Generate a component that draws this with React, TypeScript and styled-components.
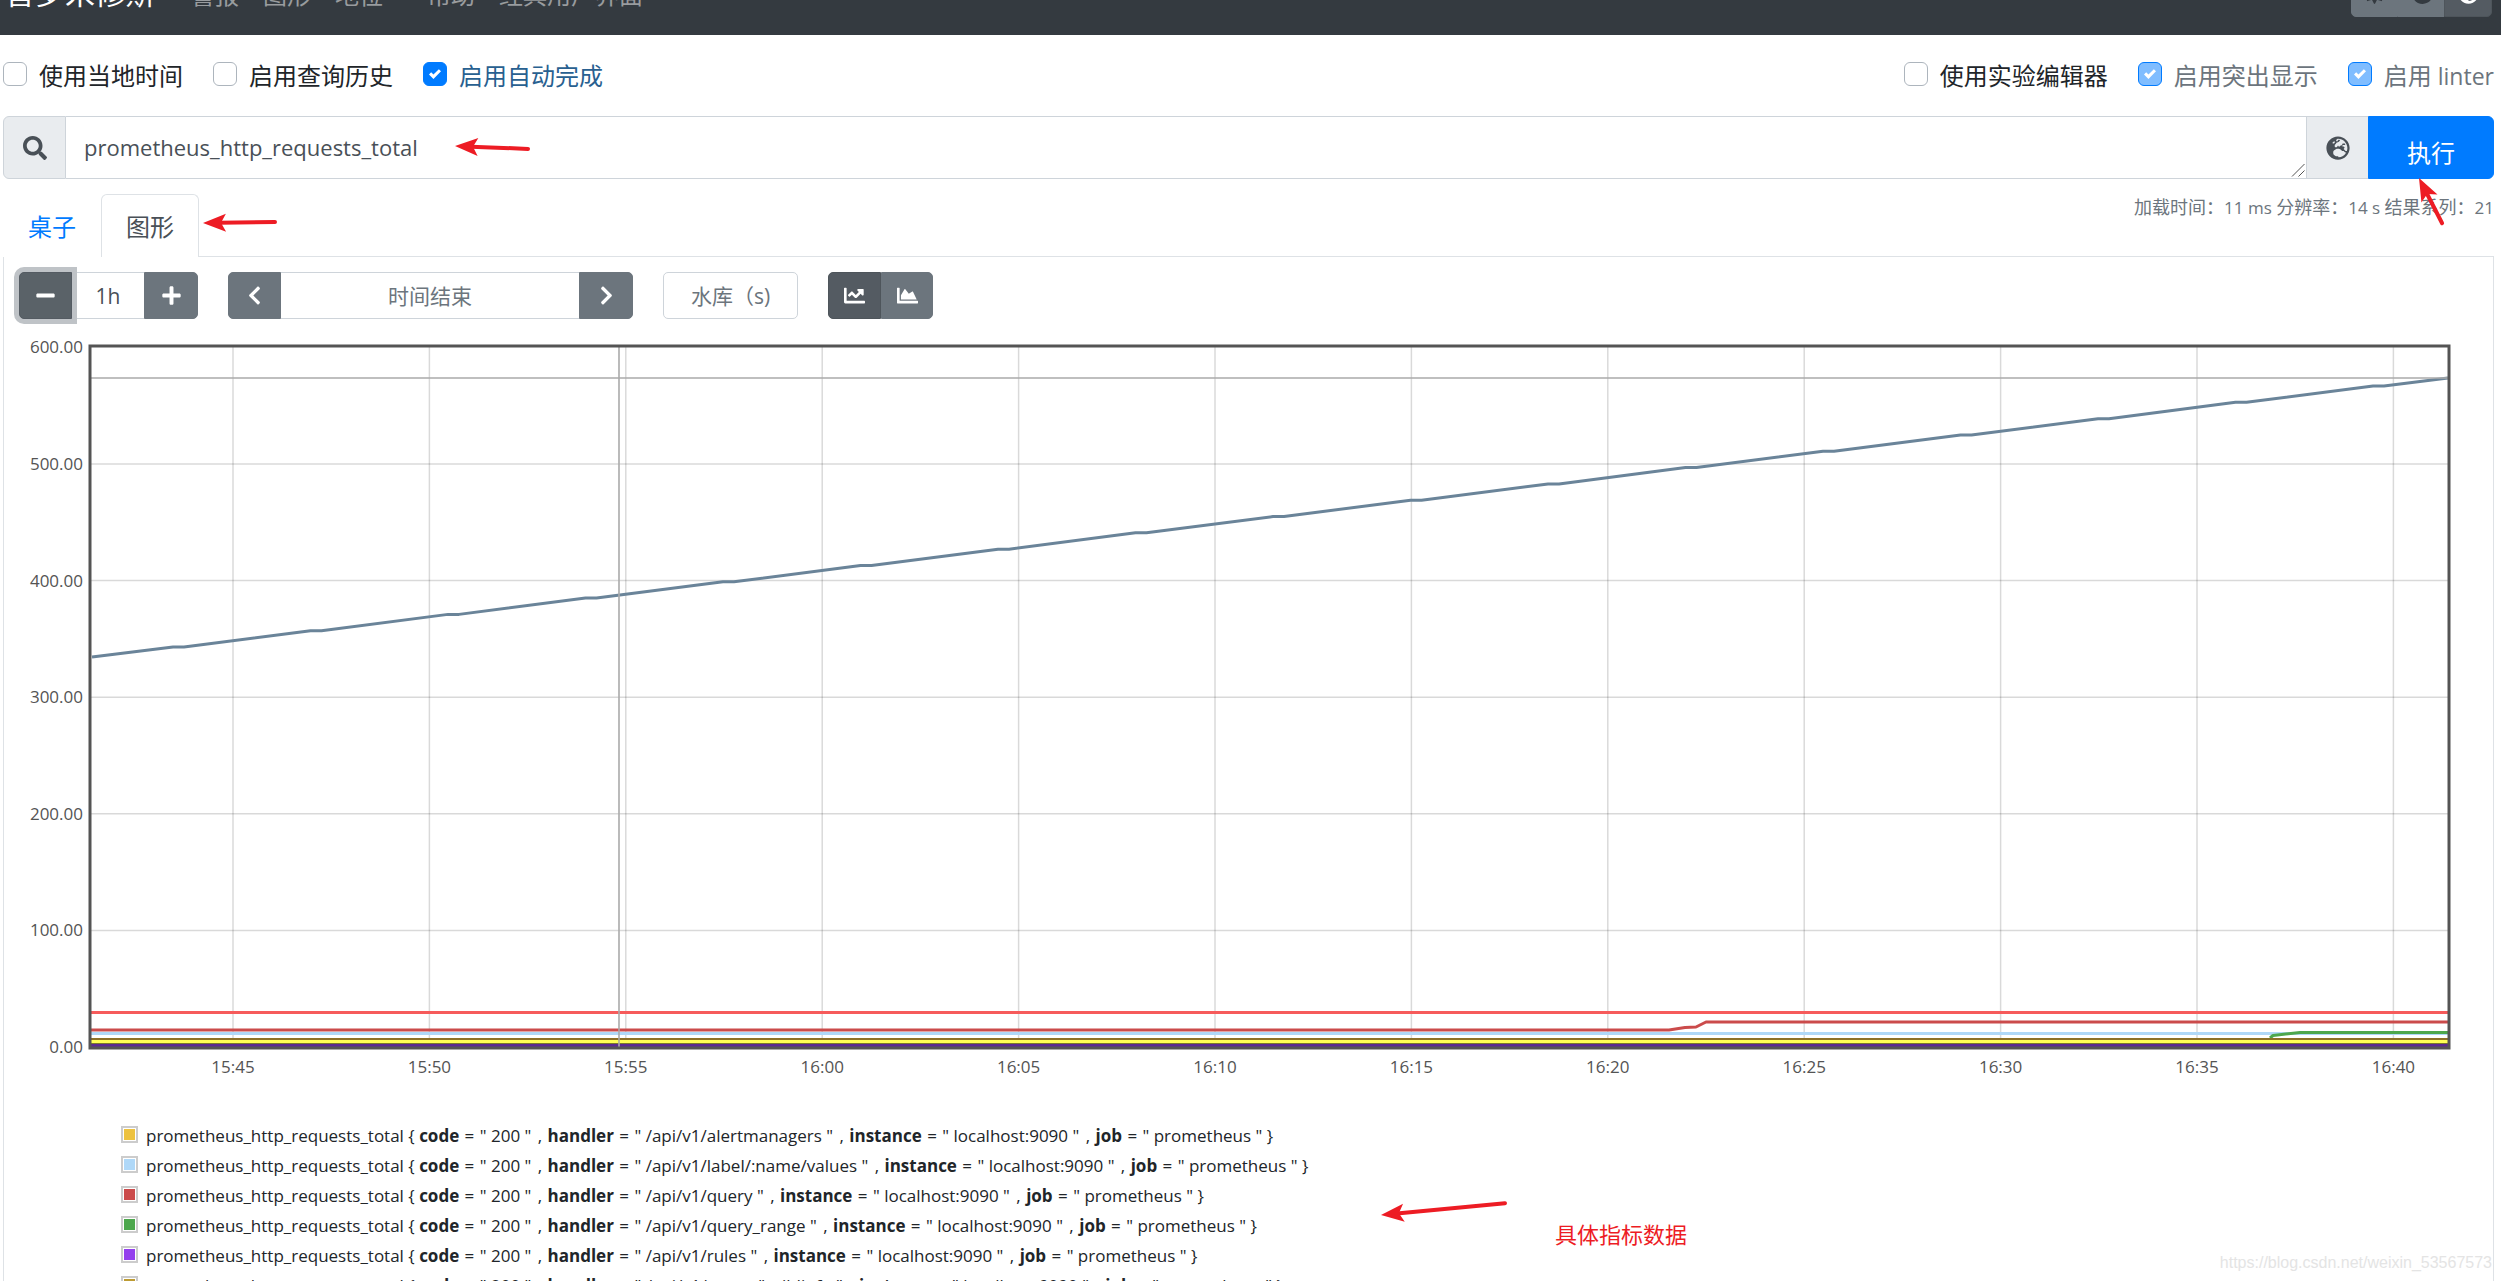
import React from "react";
import styled, { createGlobalStyle, css } from "styled-components";
import {
  FaSearch, FaSun, FaMoon, FaAdjust, FaGlobeEurope, FaMinus, FaPlus,
  FaChevronLeft, FaChevronRight, FaChartLine, FaChartArea,
} from "react-icons/fa";

const CHECK =
  "url(\"data:image/svg+xml,%3csvg xmlns='http://www.w3.org/2000/svg' width='8' height='8' viewBox='0 0 8 8'%3e%3cpath fill='%23fff' d='M6.564.75l-3.59 3.612-1.538-1.55L0 4.26l2.974 2.99L8 2.193z'/%3e%3c/svg%3e\")";
const GRIP =
  "url(\"data:image/svg+xml,%3csvg xmlns='http://www.w3.org/2000/svg' width='15' height='15' viewBox='0 0 15 15'%3e%3cpath stroke='%23555' stroke-width='1' d='M1 13.5L13.5 1M7.500 13.5L13.500 7.500'/%3e%3c/svg%3e\")";

const Global = createGlobalStyle`
  *, *::before, *::after { box-sizing: border-box; }
  html { height: 100%; overflow: hidden; }
  body {
    margin: 0;
    height: 100%;
    overflow: hidden;
    background: #fff;
    color: #212529;
    font-family: "Open Sans", "Noto Sans CJK SC", sans-serif;
    font-size: 24px;
    line-height: 36px;
  }
  button, input, textarea { font-family: inherit; margin: 0; }
`;

const Navbar = styled.header`
  display: flex;
  align-items: center;
  height: 84px;
  margin-top: -49px;
  padding: 0 9px 0 5px;
  background: #343a40;
`;
const Brand = styled.a`
  margin-right: 24px;
  padding-bottom: 2px;
  color: #fff;
  font-size: 30px;
  line-height: 45px;
  text-decoration: none;
`;
const NavLinks = styled.nav`
  display: flex;
  flex: 1;
  padding-top: 4px;
`;
const NavLink = styled.a<{ $caret?: boolean }>`
  padding: 12px;
  color: rgba(255, 255, 255, 0.5);
  text-decoration: none;
  ${(p) => p.$caret && css`
    &::after {
      content: "";
      display: inline-block;
      margin-left: 6px;
      vertical-align: 6px;
      border: 7px solid transparent;
      border-top-color: currentColor;
      border-bottom: 0;
    }
  `}
`;
const ButtonGroup = styled.div`
  display: flex;
`;
const GroupButton = styled.button<{ $active?: boolean; $dark?: boolean; $focus?: boolean; $width: number }>`
  display: flex;
  align-items: center;
  justify-content: center;
  width: ${(p) => p.$width}px;
  height: 47px;
  padding: 0;
  border: 1px solid ${(p) => (p.$active ? "#4e555b" : "#6c757d")};
  border-radius: 0;
  background: ${(p) => (p.$active ? "#545b62" : "#6c757d")};
  color: ${(p) => (p.$dark ? "#343a40" : "#fff")};
  font-size: 21px;
  ${(p) => p.$focus && css`
    position: relative;
    z-index: 1;
    background: #5a6268;
    border-color: #545b62;
    box-shadow: 0 0 0 5px #bfc3c7;
  `}
  &:first-child { border-radius: 5px 0 0 5px; }
  &:last-child { border-radius: 0 5px 5px 0; }
`;

const Options = styled.div`
  display: flex;
  justify-content: space-between;
  padding: 23px 7px 0 3px;
`;
const OptionSet = styled.div`
  display: flex;
  gap: 30px;
`;
const Option = styled.label<{ $color?: string }>`
  display: flex;
  align-items: center;
  gap: 12px;
  height: 36px;
  color: ${(p) => p.$color ?? "#212529"};
  white-space: nowrap;
`;
const Latin = styled.span<{ $size: number }>`
  font-size: ${(p) => p.$size}px;
`;
const Tick = styled.input`
  appearance: none;
  width: 24px;
  height: 24px;
  margin: 0 0 4px;
  border: 1px solid #adb5bd;
  border-radius: 6px;
  background: #fff;
  &:checked {
    border-color: #007bff;
    background: #007bff ${CHECK} center / 12px 12px no-repeat;
  }
  &:checked:disabled { background-color: #80bdff; }
`;

const QueryBar = styled.form`
  display: flex;
  height: 63px;
  margin: 22px 7px 0 3px;
`;
const Addon = styled.span`
  display: flex;
  align-items: center;
  justify-content: center;
  width: 63px;
  border: 1px solid #ced4da;
  border-radius: 6px 0 0 6px;
  background: #e9ecef;
  color: #495057;
  font-size: 24px;
`;
const Expression = styled.textarea`
  flex: 1;
  height: 63px;
  padding: 12px 18px;
  border: 1px solid #ced4da;
  border-width: 1px 0;
  color: #495057;
  font-size: 22px;
  line-height: 36px;
  resize: vertical;
  outline: 0;
  overflow: hidden;
  &::-webkit-resizer { background: ${GRIP} right bottom no-repeat; }
`;
const Explorer = styled.button`
  display: flex;
  align-items: center;
  justify-content: center;
  width: 62px;
  padding: 0;
  border: 1px solid #ced4da;
  border-right: 0;
  background: #e9ecef;
  color: #495057;
  font-size: 24px;
`;
const Execute = styled.button`
  width: 126px;
  padding: 8px 0 0;
  border: 1px solid #007bff;
  border-radius: 0 6px 6px 0;
  background: #007bff;
  color: #fff;
  font-size: 24px;
`;

const TabRow = styled.div`
  display: flex;
  justify-content: space-between;
  align-items: flex-start;
  margin: 15px 7px 0 3px;
`;
const Tabs = styled.div`
  display: flex;
`;
const Tab = styled.button<{ $active?: boolean }>`
  height: 63px;
  padding: 0 24px 2px;
  border: 1px solid transparent;
  border-bottom: 0;
  border-radius: 6px 6px 0 0;
  background: #fff;
  color: #007bff;
  font-size: 24px;
  ${(p) => p.$active && css`
    position: relative;
    border-color: #dee2e6;
    color: #495057;
  `}
`;
const Stats = styled.div`
  color: #6c757d;
  font-size: 18px;
  line-height: 26px;
`;
const Panel = styled.main`
  margin: -1px 7px 0 3px;
  border: 1px solid #dee2e6;
  border-bottom: 0;
`;
const Controls = styled.div`
  display: flex;
  gap: 30px;
  padding: 15px 15px 0;
`;
const Field = styled.input<{ $width: number; $alone?: boolean }>`
  width: ${(p) => p.$width}px;
  height: 47px;
  padding: 4px 0;
  border: 1px solid #ced4da;
  border-width: ${(p) => (p.$alone ? "1px" : "1px 0")};
  border-radius: ${(p) => (p.$alone ? 5 : 0)}px;
  color: #495057;
  font-size: 21px;
  text-align: center;
  &::placeholder { color: #6c757d; opacity: 1; }
`;

const Chart = styled.svg`
  display: block;
  width: 100%;
  height: 770px;
  margin-top: 8px;
  font-size: 17px;
  fill: #545454;
`;
const Legend = styled.ul`
  margin: 0;
  padding: 24px 0 0 117px;
  list-style: none;
`;
const LegendRow = styled.li`
  display: flex;
  align-items: center;
  gap: 8px;
  height: 30px;
  font-size: 17px;
  line-height: 30px;
  white-space: pre;
`;
const Swatch = styled.span<{ $color: string }>`
  width: 17px;
  height: 17px;
  margin-bottom: 3px;
  border: 2px solid #ccc;
  padding: 1px;
  background: ${(p) => p.$color} content-box;
`;
const Equals = styled.span`
  margin: 0 1px;
`;
const Comma = styled.span`
  margin: 0 1px 0 2px;
`;

const Overlay = styled.svg`
  position: absolute;
  left: 0;
  top: 0;
  width: 2501px;
  height: 1281px;
  pointer-events: none;
`;
const Note = styled.div`
  position: absolute;
  left: 1555px;
  top: 1216px;
  color: #ed1c24;
  font-size: 22px;
`;
const Watermark = styled.div`
  position: absolute;
  right: 9px;
  bottom: 0;
  color: #e4e4e4;
  font-family: "Liberation Sans", sans-serif;
  font-size: 16px;
`;

/* Plot geometry, in pixels of the chart's own drawing area. */
const X0 = 86;
const X1 = 2445;
const TOP = 19;
const BOTTOM = 721;
const yOf = (v: number) => 720 - v * 1.166;
const TIMES = ["15:45", "15:50", "15:55", "16:00", "16:05", "16:10", "16:15", "16:20", "16:25", "16:30", "16:35", "16:40"];
const VALUES = [0, 100, 200, 300, 400, 500, 600];

/* The counter climbs steadily and pauses for one step every 3.5 minutes. */
const metricsPoints = () => {
  const pts = [`${X0 + 2},330`];
  for (let k = 0; k <= 16; k++) {
    const x = 169 + 137.5 * k;
    const y = 320 - 16.31 * k;
    pts.push(`${x},${y} ${x + 11},${y}`);
  }
  pts.push(`${X1 - 1},51`);
  return pts.join(" ");
};

const FlatLine = ({ y, color, width = 3 }: { y: number; color: string; width?: number }) => (
  <path d={`M${X0 + 1} ${y}H${X1 - 1}`} stroke={color} strokeWidth={width} />
);

const GraphPlot = () => (
  <Chart role="img" aria-label="prometheus_http_requests_total">
    <g stroke="#000" strokeOpacity="0.15" strokeWidth="1.5">
      {TIMES.map((t, i) => <path key={t} d={`M${229 + i * 196.4} ${TOP}V${BOTTOM}`} />)}
      {VALUES.slice(1, 6).map((v) => <path key={v} d={`M${X0} ${yOf(v)}H${X1}`} />)}
    </g>
    <g fill="none" strokeLinejoin="round">
      <polyline points={metricsPoints()} stroke="#6a8499" strokeWidth="3" />
      <FlatLine y={685.6} color="#f65b5b" />
      <FlatLine y={706.5} color="#afd8f8" />
      <polyline points={`${X0 + 1},703 1665,703 1681,700.5 1692,700 1702,695 ${X1 - 1},695`} stroke="#cb4b4b" strokeWidth="3" />
      <polyline points={`2266,711 2269,708.5 2296,705.5 ${X1 - 1},705.5`} stroke="#4da74d" strokeWidth="3" />
      <FlatLine y={712} color="#8d7127" width={2} />
      <FlatLine y={714.5} color="#ffff55" />
      <FlatLine y={716.5} color="#7a7a2a" width={1} />
      <FlatLine y={718.5} color="#5a2a90" />
    </g>
    <path d={`M615 ${TOP}V${BOTTOM}M${X0} 51H${X1}`} stroke="#aaa" strokeWidth="1.6" />
    <rect x={X0} y={TOP} width={X1 - X0} height={BOTTOM - TOP} fill="none" stroke="#545454" strokeWidth="3" />
    {VALUES.map((v) => (
      <text key={v} x="79" y={yOf(v) + 6} textAnchor="end">{v.toFixed(2)}</text>
    ))}
    {TIMES.map((t, i) => (
      <text key={t} x={229 + i * 196.4} y="746" textAnchor="middle">{t}</text>
    ))}
  </Chart>
);

const SERIES = [
  ["#edc240", "/api/v1/alertmanagers"],
  ["#afd8f8", "/api/v1/label/:name/values"],
  ["#cb4b4b", "/api/v1/query"],
  ["#4da74d", "/api/v1/query_range"],
  ["#9440ed", "/api/v1/rules"],
  ["#bd9b33", "/api/v1/status/buildinfo"],
];

const LabelPair = ({ name, value }: { name: string; value: string }) => (
  <>
    <b>{name}</b>
    <Equals>{" = "}</Equals>
    {`" ${value} " `}
  </>
);

const SeriesName = ({ handler }: { handler: string }) => {
  const labels = [["code", "200"], ["handler", handler], ["instance", "localhost:9090"], ["job", "prometheus"]];
  return (
    <span>
      {"prometheus_http_requests_total { "}
      {labels.map(([name, value], i) => (
        <React.Fragment key={name}>
          {i > 0 && <Comma>{", "}</Comma>}
          <LabelPair name={name} value={value} />
        </React.Fragment>
      ))}
      {"}"}
    </span>
  );
};

const Arrow = ({ from, to }: { from: [number, number]; to: [number, number] }) => {
  const angle = (Math.atan2(to[1] - from[1], to[0] - from[0]) * 180) / Math.PI;
  const length = Math.hypot(to[0] - from[0], to[1] - from[1]);
  return (
    <g transform={`translate(${to[0]} ${to[1]}) rotate(${angle})`} fill="#ed1c24">
      <path d={`M-16 0H${-length + 2}`} stroke="#ed1c24" strokeWidth="4" strokeLinecap="round" />
      <path d="M0 0L-23 -9L-18 0L-23 9Z" />
    </g>
  );
};

export default function App() {
  return (
    <>
      <Global />
      <Navbar>
        <Brand href="#">普罗米修斯</Brand>
        <NavLinks>
          <NavLink href="#">警报</NavLink>
          <NavLink href="#">图形</NavLink>
          <NavLink href="#" $caret>地位</NavLink>
          <NavLink href="#">帮助</NavLink>
          <NavLink href="#">经典用户界面</NavLink>
        </NavLinks>
        <ButtonGroup>
          <GroupButton $width={47} $dark aria-label="light"><FaSun /></GroupButton>
          <GroupButton $width={46} $dark aria-label="dark"><FaMoon /></GroupButton>
          <GroupButton $width={48} $active aria-label="auto"><FaAdjust /></GroupButton>
        </ButtonGroup>
      </Navbar>

      <Options>
        <OptionSet>
          <Option><Tick type="checkbox" />使用当地时间</Option>
          <Option><Tick type="checkbox" />启用查询历史</Option>
          <Option $color="#286090"><Tick type="checkbox" defaultChecked />启用自动完成</Option>
        </OptionSet>
        <OptionSet>
          <Option><Tick type="checkbox" />使用实验编辑器</Option>
          <Option $color="#6c757d"><Tick type="checkbox" defaultChecked disabled />启用突出显示</Option>
          <Option $color="#6c757d">
            <Tick type="checkbox" defaultChecked disabled />
            <span>启用<Latin $size={23}> linter</Latin></span>
          </Option>
        </OptionSet>
      </Options>

      <QueryBar>
        <Addon><FaSearch /></Addon>
        <Expression rows={1} spellCheck={false} aria-label="expression" defaultValue="prometheus_http_requests_total" />
        <Explorer type="button" aria-label="metrics explorer"><FaGlobeEurope /></Explorer>
        <Execute type="button">执行</Execute>
      </QueryBar>

      <TabRow>
        <Tabs>
          <Tab>桌子</Tab>
          <Tab $active>图形</Tab>
        </Tabs>
        <Stats>
          加载时间：<Latin $size={17}>11 ms </Latin>
          分辨率：<Latin $size={17}>14 s </Latin>
          结果系列：<Latin $size={17}>21</Latin>
        </Stats>
      </TabRow>

      <Panel>
        <Controls>
          <ButtonGroup>
            <GroupButton $width={53} $focus aria-label="minus"><FaMinus /></GroupButton>
            <Field $width={72} defaultValue="1h" aria-label="range" />
            <GroupButton $width={54} aria-label="plus"><FaPlus /></GroupButton>
          </ButtonGroup>
          <ButtonGroup>
            <GroupButton $width={53} aria-label="previous"><FaChevronLeft /></GroupButton>
            <Field $width={298} placeholder="时间结束" aria-label="end time" />
            <GroupButton $width={54} aria-label="next"><FaChevronRight /></GroupButton>
          </ButtonGroup>
          <Field $width={135} $alone placeholder="水库（s)" aria-label="resolution" />
          <ButtonGroup>
            <GroupButton $width={53} $active aria-label="lines"><FaChartLine /></GroupButton>
            <GroupButton $width={52} aria-label="stacked"><FaChartArea /></GroupButton>
          </ButtonGroup>
        </Controls>
        <GraphPlot />
        <Legend>
          {SERIES.map(([color, handler]) => (
            <LegendRow key={handler}>
              <Swatch $color={color} />
              <SeriesName handler={handler} />
            </LegendRow>
          ))}
        </Legend>
      </Panel>

      <Overlay aria-hidden="true">
        <Arrow from={[530, 149]} to={[455, 146]} />
        <Arrow from={[277, 222]} to={[203, 223]} />
        <Arrow from={[2443, 225]} to={[2419, 178]} />
        <Arrow from={[1507, 1203]} to={[1381, 1215]} />
      </Overlay>
      <Note>具体指标数据</Note>
      <Watermark>https://blog.csdn.net/weixin_53567573</Watermark>
    </>
  );
}
